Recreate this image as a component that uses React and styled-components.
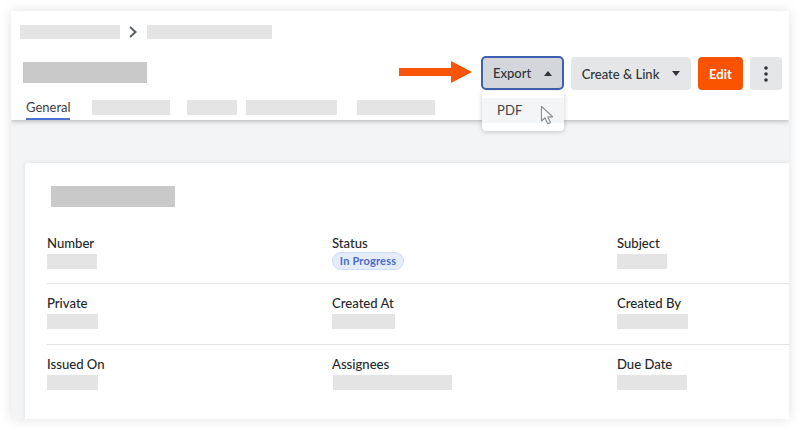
import React from "react";
import styled, { createGlobalStyle } from "styled-components";

const Global = createGlobalStyle`
  html, body { margin: 0; padding: 0; background: #fff; }
  body { font-family: Lato, "Liberation Sans", sans-serif; width: 800px; height: 430px; overflow: hidden; }
  #root { width: 800px; height: 430px; }
`;

const Page = styled.div`
  box-sizing: border-box;
  width: 800px;
  height: 430px;
  padding: 11px;
  background: #fff;
`;

const Frame = styled.div`
  width: 778px;
  height: 408px;
  background: #f3f4f6;
  box-shadow: 0 0 12px rgba(0, 0, 0, 0.12);
  display: flex;
  flex-direction: column;
  overflow: hidden;
`;

const Header = styled.header`
  box-sizing: border-box;
  position: relative;
  z-index: 2;
  height: 109px;
  flex: none;
  background: #fff;
  box-shadow: 0 1px 5px rgba(0, 0, 0, 0.28);
  padding-top: 14px;
  display: flex;
  flex-direction: column;
`;

const Bar = styled.div`
  flex: none;
  width: ${(p) => p.$w}px;
  height: ${(p) => p.$h || 15}px;
  margin-left: ${(p) => p.$ml || 0}px;
  background: ${(p) => (p.$dark ? "#c9c9c9" : "#e4e4e4")};
`;

const Crumbs = styled.div`
  display: flex;
  align-items: center;
  height: 14px;
  padding-left: 9px;
  gap: 8px;
`;

const Chevron = styled.svg`
  display: block;
  width: 10px;
  height: 14px;
  margin-right: 1px;
`;

const TitleRow = styled.div`
  display: flex;
  align-items: flex-start;
  justify-content: space-between;
  margin-top: 18px;
  height: 33px;
  padding: 0 7px 0 12px;
`;

const TitleBar = styled(Bar)`
  margin-top: 5px;
`;

const Actions = styled.div`
  display: flex;
  align-items: flex-start;
  gap: 7px;
`;

const Btn = styled.div`
  box-sizing: border-box;
  position: relative;
  display: flex;
  align-items: center;
  justify-content: center;
  height: 33px;
  width: ${(p) => p.$w}px;
  border-radius: 4px;
  font-size: 13px;
  font-weight: 500;
  color: #2f3437;
  gap: 13px;
  background: #e4e6e8;
`;

const ExportBtn = styled(Btn)`
  height: 34px;
  margin-top: -1px;
  background: #d3d7db;
  border: 2px solid #3f5fb0;
  border-radius: 5px;
`;

const EditBtn = styled(Btn)`
  background: #fa5300;
  color: #fff;
  font-weight: 700;
`;

const Caret = styled.span`
  width: 0;
  height: 0;
  border-left: 4px solid transparent;
  border-right: 4px solid transparent;
  ${(p) => (p.$up ? "border-bottom: 5px solid #2f3437;" : "border-top: 5px solid #2f3437;")}
`;

const Menu = styled.div`
  position: absolute;
  top: 33px;
  left: -1px;
  box-sizing: border-box;
  width: 82px;
  height: 40px;
  padding: 7px 0;
  background: #fff;
  border-radius: 4px;
  box-shadow: 0 1px 5px rgba(0, 0, 0, 0.2);
  z-index: 5;
`;

const MenuItem = styled.div`
  box-sizing: border-box;
  height: 25px;
  padding-left: 15px;
  line-height: 25px;
  background: #f4f5f7;
  color: #3d4449;
  font-size: 13px;
  font-weight: 400;
  letter-spacing: 0.2px;
`;

const Cursor = styled.svg`
  position: absolute;
  left: 58px;
  top: 14px;
  width: 15px;
  height: 21px;
`;

const ArrowMark = styled.svg`
  position: absolute;
  left: -84px;
  top: 2px;
  width: 74px;
  height: 24px;
`;

const Tabs = styled.nav`
  display: flex;
  align-items: flex-start;
  margin-top: 10px;
  padding-left: 15px;
  height: 20px;
  position: relative;
`;

const ActiveTab = styled.div`
  box-sizing: border-box;
  width: 44px;
  height: 20px;
  margin-right: 22px;
  font-size: 13px;
  line-height: 14px;
  color: #3a4045;
  border-bottom: 2px solid #4a6fd6;
  white-space: nowrap;
`;

const TabBars = styled.div`
  display: flex;
  align-items: flex-start;
`;

const TabBar = styled(Bar)`
  margin-right: ${(p) => p.$mr}px;
`;

const Body = styled.main`
  flex: 1;
  padding: 43px 0 0 14px;
  min-height: 0;
`;

const Card = styled.section`
  box-sizing: border-box;
  height: 256px;
  background: #fff;
  border-radius: 3px 0 0 0;
  box-shadow: 0 0 4px rgba(0, 0, 0, 0.1);
  padding: 23px 0 0 22px;
`;

const CardTitle = styled(Bar)`
  margin: 0 0 27px 4px;
`;

const Row = styled.div`
  display: grid;
  grid-template-columns: 285px 285px 1fr;
  height: ${(p) => p.$h}px;
  box-sizing: border-box;
  padding-top: ${(p) => p.$pt}px;
  border-bottom: ${(p) => (p.$last ? "none" : "1px solid #e2e3e5")};
`;

const Field = styled.div`
  display: flex;
  flex-direction: column;
  align-items: flex-start;
`;

const Label = styled.div`
  font-size: 13.1px;
  line-height: 19px;
  height: 18px;
  font-weight: 500;
  color: #25282b;
  margin-bottom: ${(p) => p.$mb ?? 2}px;
`;

const Badge = styled.span`
  box-sizing: border-box;
  height: 18px;
  width: 72px;
  border-radius: 9px;
  background: #e4ecfb;
  border: 1px solid #cfdcf6;
  color: #4a6bc9;
  font-size: 11px;
  font-weight: 700;
  line-height: 16px;
  text-align: center;
  letter-spacing: 0.2px;
`;

const Dots = styled.svg`
  display: block;
  width: 4px;
  height: 16px;
`;

export default function App() {
  return (
    <Page>
      <Global />
      <Frame>
        <Header>
          <Crumbs>
            <Bar $w={100} $h={14} />
            <Chevron viewBox="0 0 10 14">
              <path d="M2 2 L7.5 7 L2 12" fill="none" stroke="#5a6268" strokeWidth="2" />
            </Chevron>
            <Bar $w={125} $h={14} />
          </Crumbs>
          <TitleRow>
            <TitleBar $w={124} $h={21} $dark />
            <Actions>
              <ExportBtn $w={83}>
                <ArrowMark viewBox="0 0 74 24">
                  <rect x="0" y="8" width="53" height="8" fill="#f95407" />
                  <path d="M52 1 L73 12 L52 23 Z" fill="#f95407" />
                </ArrowMark>
                Export
                <Caret $up />
                <Menu>
                  <MenuItem>PDF</MenuItem>
                  <Cursor viewBox="0 0 15 21">
                    <path d="M1.5 1.5 V16 L5 12.8 L7.6 18.8 L10.4 17.6 L7.8 11.8 H12.6 Z" fill="#fff" stroke="#8b9094" strokeWidth="1.2" strokeLinejoin="round" />
                  </Cursor>
                </Menu>
              </ExportBtn>
              <Btn $w={120}>
                Create &amp; Link
                <Caret />
              </Btn>
              <EditBtn $w={45}>Edit</EditBtn>
              <Btn $w={32}>
                <Dots viewBox="0 0 4 16">
                  <circle cx="2" cy="2" r="1.8" fill="#2f3437" />
                  <circle cx="2" cy="8" r="1.8" fill="#2f3437" />
                  <circle cx="2" cy="14" r="1.8" fill="#2f3437" />
                </Dots>
              </Btn>
            </Actions>
          </TitleRow>
          <Tabs>
            <ActiveTab>General</ActiveTab>
            <TabBars>
              <TabBar $w={78} $mr={17} />
              <TabBar $w={50} $mr={9} />
              <TabBar $w={91} $mr={20} />
              <TabBar $w={78} $mr={0} />
            </TabBars>
          </Tabs>
        </Header>
        <Body>
          <Card>
            <CardTitle $w={124} $h={21} $dark />
            <Row $h={50} $pt={0}>
              <Field>
                <Label>Number</Label>
                <Bar $w={50} />
              </Field>
              <Field>
                <Label $mb={0}>Status</Label>
                <Badge>In Progress</Badge>
              </Field>
              <Field>
                <Label>Subject</Label>
                <Bar $w={50} />
              </Field>
            </Row>
            <Row $h={61} $pt={10}>
              <Field>
                <Label>Private</Label>
                <Bar $w={51} />
              </Field>
              <Field>
                <Label>Created At</Label>
                <Bar $w={63} />
              </Field>
              <Field>
                <Label>Created By</Label>
                <Bar $w={71} />
              </Field>
            </Row>
            <Row $h={60} $pt={10} $last>
              <Field>
                <Label>Issued On</Label>
                <Bar $w={51} />
              </Field>
              <Field>
                <Label>Assignees</Label>
                <Bar $w={119} $ml={1} />
              </Field>
              <Field>
                <Label>Due Date</Label>
                <Bar $w={70} />
              </Field>
            </Row>
          </Card>
        </Body>
      </Frame>
    </Page>
  );
}
